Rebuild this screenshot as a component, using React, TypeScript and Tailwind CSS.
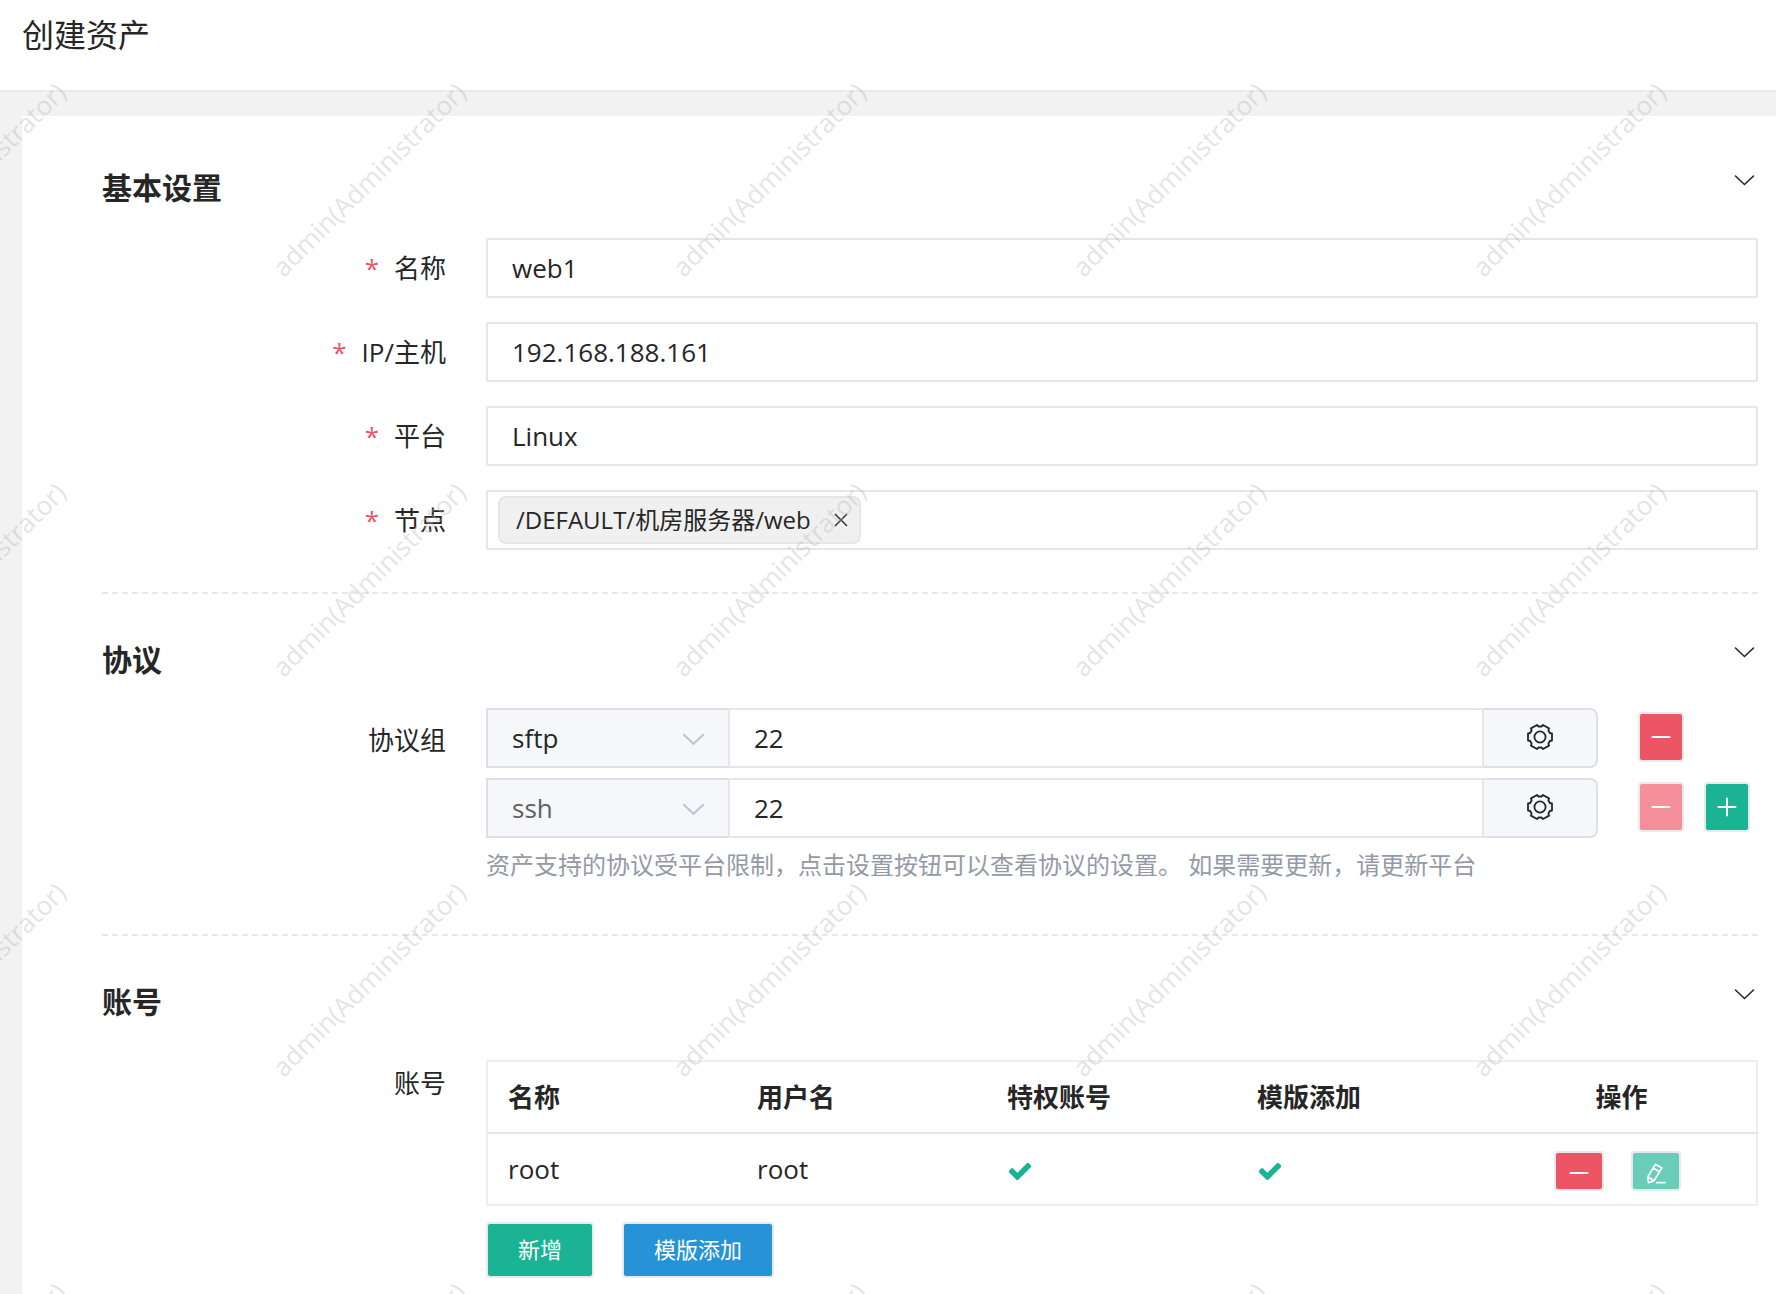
import { useState } from "react"
import type { ReactNode } from "react"

const accounts = [
	{ name: "root", username: "root", privileged: true, template: true },
]

const watermarks = Array.from({ length: 20 })

function ChevronIcon({ className }: { className?: string }) {
	return (
		<svg viewBox="0 0 28 28" fill="none" stroke="currentColor" strokeLinecap="round" className={className}>
			<path d="M5.500 10l9 8.500 9-8.500" />
		</svg>
	)
}

function GearIcon() {
	return (
		<svg viewBox="-13 -13 26 26" className="size-[26px]" fill="none" stroke="currentColor" strokeWidth="1.8" strokeLinejoin="round">
			<path d="M12-3.500V3.500L9.800 4 8.400 6.500 9 8.600 3 12 1.400 10.500H-1.400L-3 12-9 8.600-8.400 6.500-9.800 4-12 3.500V-3.500L-9.800-4-8.400-6.500-9-8.600-3-12-1.400-10.500H1.400L3-12 9-8.600 8.400-6.500 9.800-4Z" />
			<circle r="5.6" />
		</svg>
	)
}

function MinusIcon() {
	return (
		<svg viewBox="0 0 20 20" className="size-5" fill="none" stroke="currentColor" strokeWidth="2" strokeLinecap="round">
			<path d="M1.500 10h17" />
		</svg>
	)
}

function PlusIcon() {
	return (
		<svg viewBox="0 0 20 20" className="size-5" fill="none" stroke="currentColor" strokeWidth="2" strokeLinecap="round">
			<path d="M1.500 10h17M10 1.500v17" />
		</svg>
	)
}

function EditIcon() {
	return (
		<svg viewBox="0 0 60 64" className="h-[21px] w-5" fill="none" stroke="currentColor" strokeWidth="5" strokeLinejoin="round" strokeLinecap="round">
			<path d="M28 4L48 15 24 54 7 60 5 42ZM21 15L41 27M5 42L24 54M32 60H57" />
		</svg>
	)
}

function CheckIcon() {
	return (
		<svg viewBox="0 0 1792 1792" className="size-[26px]" fill="#1ab394" role="img" aria-label="是">
			<path d="M1671 566q0 40-28 68l-724 724-136 136q-28 28-68 28t-68-28l-136-136-362-362q-28-28-28-68t28-68l136-136q28-28 68-28t68 28l294 295 656-657q28-28 68-28t68 28l136 136q28 28 28 68z" />
		</svg>
	)
}

function Section({ title, className, children }: { title: string; className: string; children: ReactNode }) {
	return (
		<section className={className}>
			<div className="flex items-start justify-between">
				<h2 className="text-[30px] leading-[48px] font-bold">{title}</h2>
				<button type="button" aria-label={"收起" + title} className="pt-0.5">
					<ChevronIcon className="size-7 stroke-[1.6]" />
				</button>
			</div>
			{children}
		</section>
	)
}

function Label({ htmlFor, required, children }: { htmlFor: string; required?: boolean; children: ReactNode }) {
	return (
		<label htmlFor={htmlFor} className="flex w-[344px] shrink-0 justify-end gap-[15px] leading-[60px]">
			{required && <span className="text-[#ed5565]">*</span>}
			<span>{children}</span>
		</label>
	)
}

function TextField({ id, label, value }: { id: string; label: string; value: string }) {
	return (
		<div className="flex gap-10">
			<Label htmlFor={id} required>{label}</Label>
			<input
				id={id}
				type="text"
				defaultValue={value}
				className="h-[60px] min-w-0 flex-1 rounded-xs border-2 border-[#e5e6e7] px-6 outline-none"
			/>
		</div>
	)
}

function ProtocolRow({ id, protocol, disabled, addable }: { id: string; protocol: string; disabled?: boolean; addable?: boolean }) {
	return (
		<div className="flex gap-10">
			<div className="flex h-[60px] min-w-0 flex-1">
				<div className="relative w-[242px] shrink-0">
					<select
						id={id}
						defaultValue={protocol}
						disabled={disabled}
						className="h-full w-full appearance-none border-2 border-r-0 border-[#dcdfe6] bg-[#f5f7fa] px-6 outline-none disabled:text-[#606060] disabled:opacity-100"
					>
						<option value="sftp">sftp</option>
						<option value="ssh">ssh</option>
					</select>
					<ChevronIcon className="pointer-events-none absolute top-4 right-5 size-[30px] stroke-[1.9] text-[#c0c4cc]" />
				</div>
				<input
					type="text"
					aria-label={protocol + " 端口"}
					defaultValue="22"
					className="min-w-0 flex-1 border-2 border-[#e5e6e7] px-6 outline-none"
				/>
				<button
					type="button"
					aria-label="设置"
					className="flex w-[114px] items-center justify-center rounded-r-lg border-2 border-l-0 border-[#dcdfe6] bg-[#f5f7fa] pb-0.5"
				>
					<GearIcon />
				</button>
			</div>
			<div className="flex w-[120px] gap-5 pt-1">
				<button
					type="button"
					aria-label="删除"
					disabled={disabled}
					className="flex h-[50px] w-[46px] items-center justify-center rounded border-2 border-[#e7eaec] bg-[#ed5565] text-white disabled:bg-[#f5909a]"
				>
					<MinusIcon />
				</button>
				{addable && (
					<button
						type="button"
						aria-label="添加"
						className="flex h-[50px] w-[46px] items-center justify-center rounded border-2 border-[#e7eaec] bg-[#1ab394] text-white"
					>
						<PlusIcon />
					</button>
				)}
			</div>
		</div>
	)
}

export default function App() {
	const [nodes, setNodes] = useState(["/DEFAULT/机房服务器/web"])

	return (
		<div className="relative flex min-h-screen flex-col overflow-hidden bg-[#f2f2f2] font-['Open_Sans','Noto_Sans_CJK_SC',sans-serif] text-[26px] text-[#262626]">
			<header className="h-[92px] border-b-2 border-[#e7eaf3] bg-white px-[22px]">
				<h1 className="text-[32px] leading-[70px]">创建资产</h1>
			</header>

			<main className="mt-6 ml-[22px] flex-1 bg-white pr-[18px] pl-20">
				<form>
					<Section title="基本设置" className="border-b-2 border-dashed border-[#e7eaec] pt-12 pb-[42px]">
						<div className="mt-[26px] flex flex-col gap-6">
							<TextField id="name" label="名称" value="web1" />
							<TextField id="address" label="IP/主机" value="192.168.188.161" />
							<TextField id="platform" label="平台" value="Linux" />
							<div className="flex gap-10">
								<Label htmlFor="nodes" required>节点</Label>
								<div className="flex h-[60px] min-w-0 flex-1 items-center rounded-xs border-2 border-[#e5e6e7] px-2.5">
									{nodes.map((node) => (
										<span
											key={node}
											className="flex h-12 shrink-0 items-center gap-5 rounded-lg border-2 border-[#e5e6e7] bg-[#f0f0f0] pr-2 pl-4 text-2xl"
										>
											{node}
											<button
												type="button"
												aria-label="移除节点"
												onClick={() => setNodes(nodes.filter((n) => n !== node))}
											>
												<svg viewBox="0 0 20 20" className="size-5" fill="none" stroke="currentColor" strokeWidth="1.4">
													<path d="M4 4l12 12M16 4L4 16" />
												</svg>
											</button>
										</span>
									))}
									<input id="nodes" type="text" className="min-w-0 flex-1 outline-none" />
								</div>
							</div>
						</div>
					</Section>

					<Section title="协议" className="border-b-2 border-dashed border-[#e7eaec] pt-[42px] pb-[42px]">
						<div className="mt-6 flex gap-10">
							<div className="pt-0.5">
								<Label htmlFor="protocol-sftp">协议组</Label>
							</div>
							<div className="min-w-0 flex-1">
								<div className="flex flex-col gap-2.5">
									<ProtocolRow id="protocol-sftp" protocol="sftp" />
									<ProtocolRow id="protocol-ssh" protocol="ssh" disabled addable />
								</div>
								<p className="text-2xl leading-[54px] text-[#949aa5]">
									资产支持的协议受平台限制，点击设置按钮可以查看协议的设置。 如果需要更新，请更新平台
								</p>
							</div>
						</div>
					</Section>

					<Section title="账号" className="pt-[42px] pb-3">
						<div className="mt-[34px] flex gap-10">
							<div id="accounts-label" className="w-[344px] shrink-0 text-right leading-[46px]">账号</div>
							<div className="min-w-0 flex-1">
								<table aria-labelledby="accounts-label" className="w-full table-fixed border-collapse border-2 border-[#ebeef5]">
									<thead>
										<tr className="h-[72px] border-b-2 border-[#e5e6e7] text-left">
											<th className="px-5">名称</th>
											<th className="px-5">用户名</th>
											<th className="px-5">特权账号</th>
											<th className="px-5">模版添加</th>
											<th className="w-[270px] text-center">操作</th>
										</tr>
									</thead>
									<tbody>
										{accounts.map((account) => (
											<tr key={account.name} className="h-[72px]">
												<td className="px-5">{account.name}</td>
												<td className="px-5">{account.username}</td>
												<td className="px-5 pt-1">{account.privileged && <CheckIcon />}</td>
												<td className="px-5 pt-1">{account.template && <CheckIcon />}</td>
												<td className="pt-1">
													<div className="flex justify-center gap-[27px] pr-2">
														<button
															type="button"
															aria-label="删除账号"
															className="flex h-10 w-[50px] items-center justify-center rounded border-2 border-[#e7eaec] bg-[#ed5565] pt-1 text-white"
														>
															<MinusIcon />
														</button>
														<button
															type="button"
															aria-label="编辑账号"
															className="flex h-10 w-[50px] items-center justify-center rounded border-2 border-[#e7eaec] bg-[#6acdb9] pt-1 text-white"
														>
															<EditIcon />
														</button>
													</div>
												</td>
											</tr>
										))}
									</tbody>
								</table>
								<div className="mt-4 flex gap-7 text-[22px] text-white">
									<button type="button" className="h-14 rounded border-2 border-[#e7eaec] bg-[#1ab394] px-[30px] pb-0.5">新增</button>
									<button type="button" className="h-14 rounded border-2 border-[#e7eaec] bg-[#2693d7] px-[30px] pb-0.5">模版添加</button>
								</div>
							</div>
						</div>
					</Section>
				</form>
			</main>

			{/* Watermark */}
			<div aria-hidden="true" className="pointer-events-none absolute inset-0 overflow-hidden">
				<div className="absolute -top-[21px] -left-[231px] grid grid-cols-[repeat(5,400px)] auto-rows-[400px]">
					{watermarks.map((_, i) => (
						<div key={i} className="flex items-center justify-center">
							<span className="-rotate-45 text-[26px] text-[#b8b8b8]/40">admin(Administrator)</span>
						</div>
					))}
				</div>
			</div>
		</div>
	)
}
